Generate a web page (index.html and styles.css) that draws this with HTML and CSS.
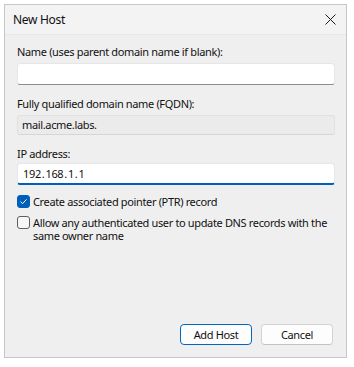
FILE: index.html
```html
<!DOCTYPE html>
<html>
<head>
    <title>New Host</title>
    <link rel="stylesheet" href="styles.css">
</head>
<body>
    <div class="window">
        <div class="titlebar">
            <span class="title">New Host</span>
            <span class="close">
                <svg width="11" height="11" viewBox="0 0 11 11">
                    <path d="M0.5 0.5 L10.5 10.5 M10.5 0.5 L0.5 10.5" stroke="#1a1a1a" stroke-width="1" fill="none"/>
                </svg>
            </span>
        </div>
        <div class="content">
            <div class="field">
                <label class="label">Name (uses parent domain name if blank):</label>
                <div class="input"></div>
            </div>
            <div class="field">
                <label class="label">Fully qualified domain name (FQDN):</label>
                <div class="input readonly">mail.acme.labs.</div>
            </div>
            <div class="field ip-field">
                <label class="label">IP address:</label>
                <div class="input focused ip">
                    <span>192</span>.<span>168</span>.<span>1</span>.<span>1</span>
                </div>
            </div>
            <div class="check-row">
                <span class="box checked">
                    <svg width="9" height="9" viewBox="0 0 9 9">
                        <path d="M1.6 4.7 L3.6 6.6 L7.5 2.4" stroke="#fff" stroke-width="1" fill="none"/>
                    </svg>
                </span>
                <span class="check-text">Create associated pointer (PTR) record</span>
            </div>
            <div class="check-row">
                <span class="box"></span>
                <span class="check-text">Allow any authenticated user to update DNS records with the same owner name</span>
            </div>
            <div class="spacer"></div>
            <div class="buttons">
                <button class="btn default">Add Host</button>
                <button class="btn">Cancel</button>
            </div>
        </div>
    </div>
</body>
</html>
```
FILE: styles.css
```css
body {
    margin: 0;
    padding: 4px 0 0 4px;
    background-color: #fff;
    font-family: "Noto Sans", "Open Sans", sans-serif;
    font-size: 11px;
    letter-spacing: -0.35px;
    color: #111;
}

.window {
    width: 343px;
    height: 354px;
    border: 1px solid #c6c6c6;
    background-color: #efefef;
    display: flex;
    flex-direction: column;
    box-sizing: border-box;
}

.titlebar {
    height: 30px;
    background-color: #f3f3f3;
    display: flex;
    align-items: center;
    justify-content: space-between;
    padding: 0 10px 0 8px;
    border-bottom: 1px solid #e9e9e9;
    box-sizing: border-box;
    flex-shrink: 0;
}

.title {
    font-size: 12px;
    letter-spacing: -0.3px;
}

.close {
    display: flex;
    width: 11px;
    height: 11px;
}

.content {
    flex: 1;
    display: flex;
    flex-direction: column;
    padding: 9px 11px 12px 12px;
}

.field {
    display: flex;
    flex-direction: column;
    margin-bottom: 11px;
}

.label {
    line-height: 16px;
    margin-bottom: 3px;
}

.ip-field .label {
    margin-bottom: 1px;
}

.input {
    height: 22px;
    background-color: #fff;
    border: 1px solid #e6e6e6;
    border-bottom: 1px solid #8c8c8c;
    border-radius: 3px;
    box-sizing: border-box;
    padding: 0 4px;
    line-height: 20px;
}

.readonly {
    height: 20px;
    line-height: 18px;
    background-color: #ebebeb;
    border-color: #e0e0e0;
    border-bottom-color: #d6d6d6;
}

.focused {
    border-bottom: 2px solid #005fb8;
    line-height: 19px;
}

.ip span {
    margin: 0 1px;
}

.ip span:first-child {
    margin-left: 1px;
}

.ip-field {
    margin-bottom: 10px;
}

.check-row {
    display: flex;
    align-items: flex-start;
    margin-bottom: 8px;
}

.box {
    width: 13px;
    height: 13px;
    box-sizing: border-box;
    border: 1px solid #5e5e5e;
    border-radius: 3px;
    background-color: #f6f6f6;
    margin-right: 3px;
    flex-shrink: 0;
    display: flex;
    align-items: center;
    justify-content: center;
}

.box.checked {
    background-color: #005fb8;
    border-color: #005fb8;
}

.check-text {
    line-height: 13px;
}

.spacer {
    flex: 1;
}

.buttons {
    display: flex;
    justify-content: flex-end;
    gap: 9px;
    padding-right: 2px;
}

.btn {
    width: 72px;
    height: 21px;
    font-family: inherit;
    font-size: 11px;
    letter-spacing: -0.35px;
    color: #111;
    background-color: #fdfdfd;
    border: 1px solid #d3d3d3;
    border-bottom-color: #c2c2c2;
    border-radius: 4px;
    padding: 0;
}

.btn.default {
    border-color: #0067c0;
}
```
